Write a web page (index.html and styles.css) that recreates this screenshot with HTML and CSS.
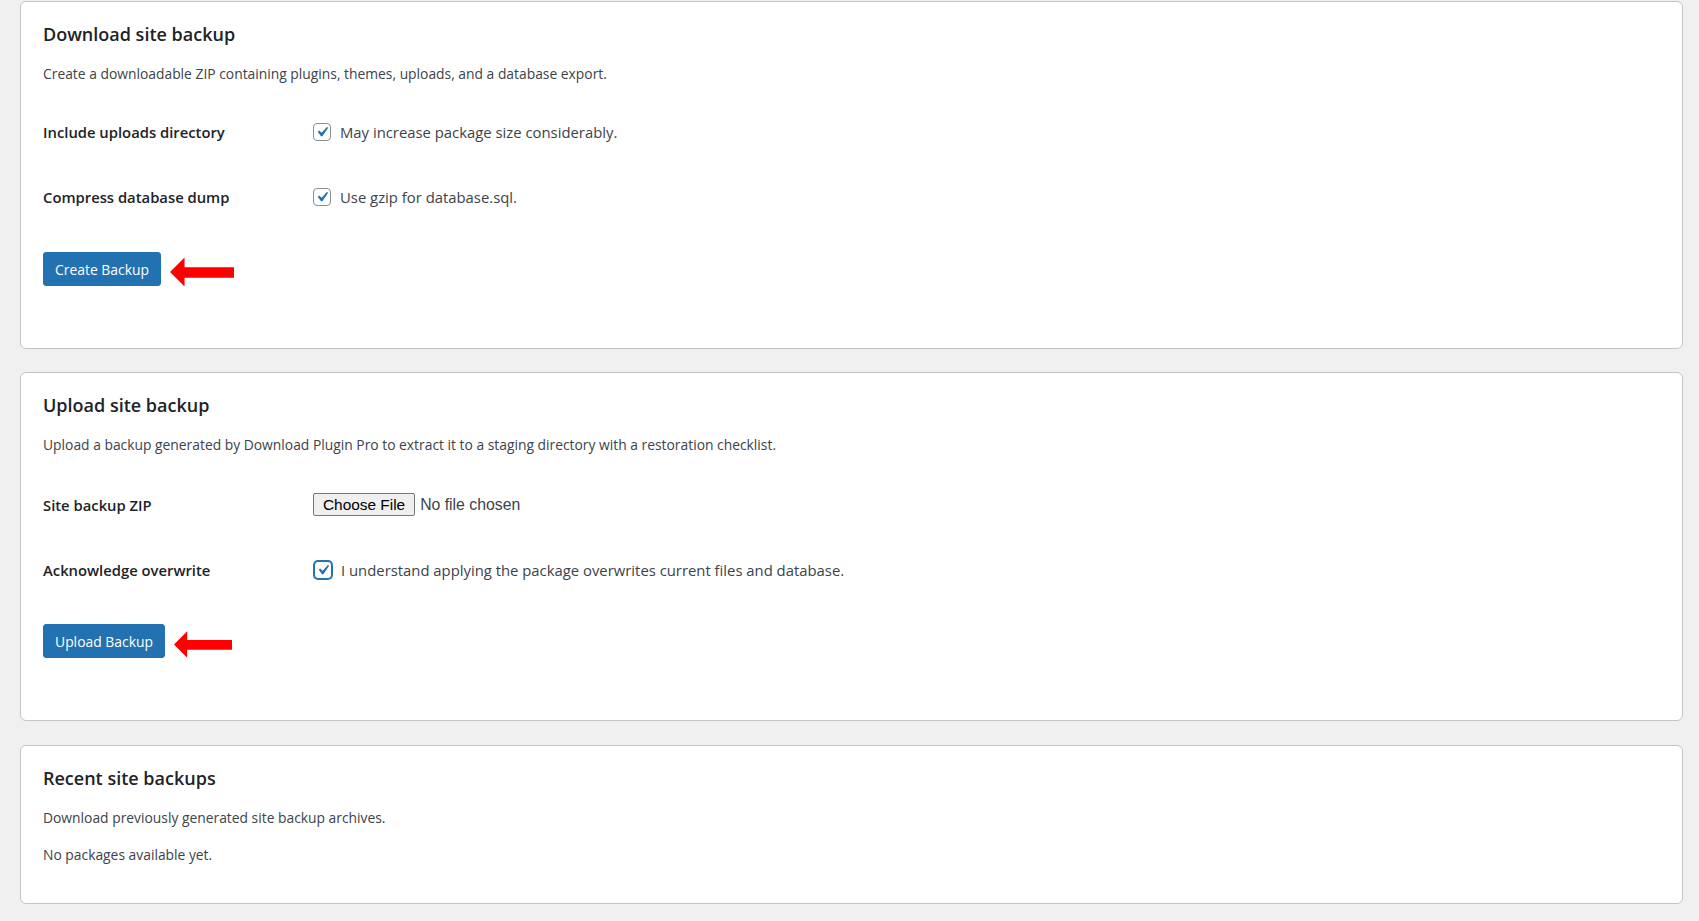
FILE: index.html
```html
<!DOCTYPE html>
<html lang="en">
<head>
<meta charset="utf-8">
<title>Site backups</title>
<link rel="stylesheet" href="styles.css">
</head>
<body>
<div class="page">
  <section class="card">
    <h2 class="card-title">Download site backup</h2>
    <p class="desc">Create a downloadable ZIP containing plugins, themes, uploads, and a database export.</p>
    <div class="rows">
      <div class="row">
        <div class="row-label">Include uploads directory</div>
        <label class="check">
          <span class="cb"><svg viewBox="0 0 20 20" width="18" height="18"><path d="M14.83 4.89l1.34.94-5.81 8.38H9.02L5.78 9.67l1.34-1.25 2.57 2.4z" fill="#2271b1"/></svg></span>
          <span class="check-text">May increase package size considerably.</span>
        </label>
      </div>
      <div class="row">
        <div class="row-label">Compress database dump</div>
        <label class="check">
          <span class="cb"><svg viewBox="0 0 20 20" width="18" height="18"><path d="M14.83 4.89l1.34.94-5.81 8.38H9.02L5.78 9.67l1.34-1.25 2.57 2.4z" fill="#2271b1"/></svg></span>
          <span class="check-text">Use gzip for database.sql.</span>
        </label>
      </div>
    </div>
    <div class="actions">
      <button class="btn" type="button">Create Backup</button>
      <svg class="arrow" viewBox="0 0 66 30" width="64" height="30"><polygon points="0,15 15,0 15,10 66,10 66,21 15,21 15,30" fill="#ff0000"/></svg>
    </div>
  </section>

  <section class="card card-upload">
    <h2 class="card-title">Upload site backup</h2>
    <p class="desc">Upload a backup generated by Download Plugin Pro to extract it to a staging directory with a restoration checklist.</p>
    <div class="rows">
      <div class="row">
        <div class="row-label">Site backup ZIP</div>
        <div class="file-wrap"><input class="file" type="file"></div>
      </div>
      <div class="row">
        <div class="row-label">Acknowledge overwrite</div>
        <label class="check">
          <span class="cb focus"><svg viewBox="0 0 20 20" width="18" height="18"><path d="M14.83 4.89l1.34.94-5.81 8.38H9.02L5.78 9.67l1.34-1.25 2.57 2.4z" fill="#2271b1"/></svg></span>
          <span class="check-text">I understand applying the package overwrites current files and database.</span>
        </label>
      </div>
    </div>
    <div class="actions">
      <button class="btn" type="button">Upload Backup</button>
      <svg class="arrow arrow-2" viewBox="0 0 66 30" width="58" height="27"><polygon points="0,15 15,0 15,10 66,10 66,21 15,21 15,30" fill="#ff0000"/></svg>
    </div>
  </section>

  <section class="card card-small">
    <h2 class="card-title">Recent site backups</h2>
    <p class="desc">Download previously generated site backup archives.</p>
    <p class="note">No packages available yet.</p>
  </section>
</div>
</body>
</html>
```
FILE: styles.css
```css
html, body {
  margin: 0;
  padding: 0;
  background: #f0f0f1;
}
body {
  font-family: "Open Sans", "Noto Sans", sans-serif;
  font-size: 13.85px;
  color: #3c434a;
}
.page {
  padding: 1px 16px 0 20px;
  display: flex;
  flex-direction: column;
  gap: 23px;
}
.card {
  background: #fff;
  border: 1px solid #c3c4c7;
  border-radius: 6px;
  padding: 18px 22px 24px;
}
.card-upload {
  padding-bottom: 25px;
}
.card-upload .rows {
  margin-top: 17px;
}
.card-small {
  margin-top: 1px;
}
.card-title {
  margin: 0;
  font-size: 18px;
  line-height: 28px;
  font-weight: 600;
  color: #1d2327;
}
.desc {
  margin: 15px 0 0;
  line-height: 21px;
}
.note {
  margin: 16px 0 14px;
  line-height: 21px;
}
.rows {
  margin-top: 15px;
}
.row {
  display: grid;
  grid-template-columns: 270px 1fr;
  align-items: center;
  height: 65px;
}
.row-label {
  font-weight: 600;
  color: #1d2327;
  font-size: 14.8px;
}
.check {
  display: flex;
  align-items: center;
  gap: 9px;
  font-size: 14.85px;
}
.cb {
  box-sizing: border-box;
  width: 18px;
  height: 18px;
  border: 1px solid #8c8f94;
  border-radius: 4px;
  background: #fff;
  display: flex;
  align-items: center;
  justify-content: center;
  flex: none;
}
.cb svg {
  display: block;
  width: 20px;
  height: 20px;
  flex: none;
}
.cb.focus {
  border-color: #2271b1;
  box-shadow: 0 0 0 1px #2271b1;
  margin-left: 1px;
}
.file {
  font-family: "Liberation Sans", Arial, sans-serif;
  font-size: 15.8px;
  color: #3c434a;
}
.file::file-selector-button {
  font-family: "Liberation Sans", Arial, sans-serif;
  font-size: 15.4px;
  color: #000;
  background: #efefef;
  border: 1px solid #767676;
  border-radius: 2px;
  padding: 1px 9px;
  height: 23px;
  margin-right: 5px;
}
.actions {
  margin: 22px 0 37px;
  display: flex;
  align-items: center;
  gap: 9px;
}
.btn {
  font-family: "Open Sans", "Noto Sans", sans-serif;
  font-size: 13.9px;
  color: #fff;
  background: #2271b1;
  border: 1px solid #2271b1;
  border-radius: 3px;
  height: 34px;
  padding: 0 11px;
  cursor: pointer;
}
.arrow {
  display: block;
  margin-top: 6px;
}
.arrow-2 {
  margin-top: 7px;
}
```
